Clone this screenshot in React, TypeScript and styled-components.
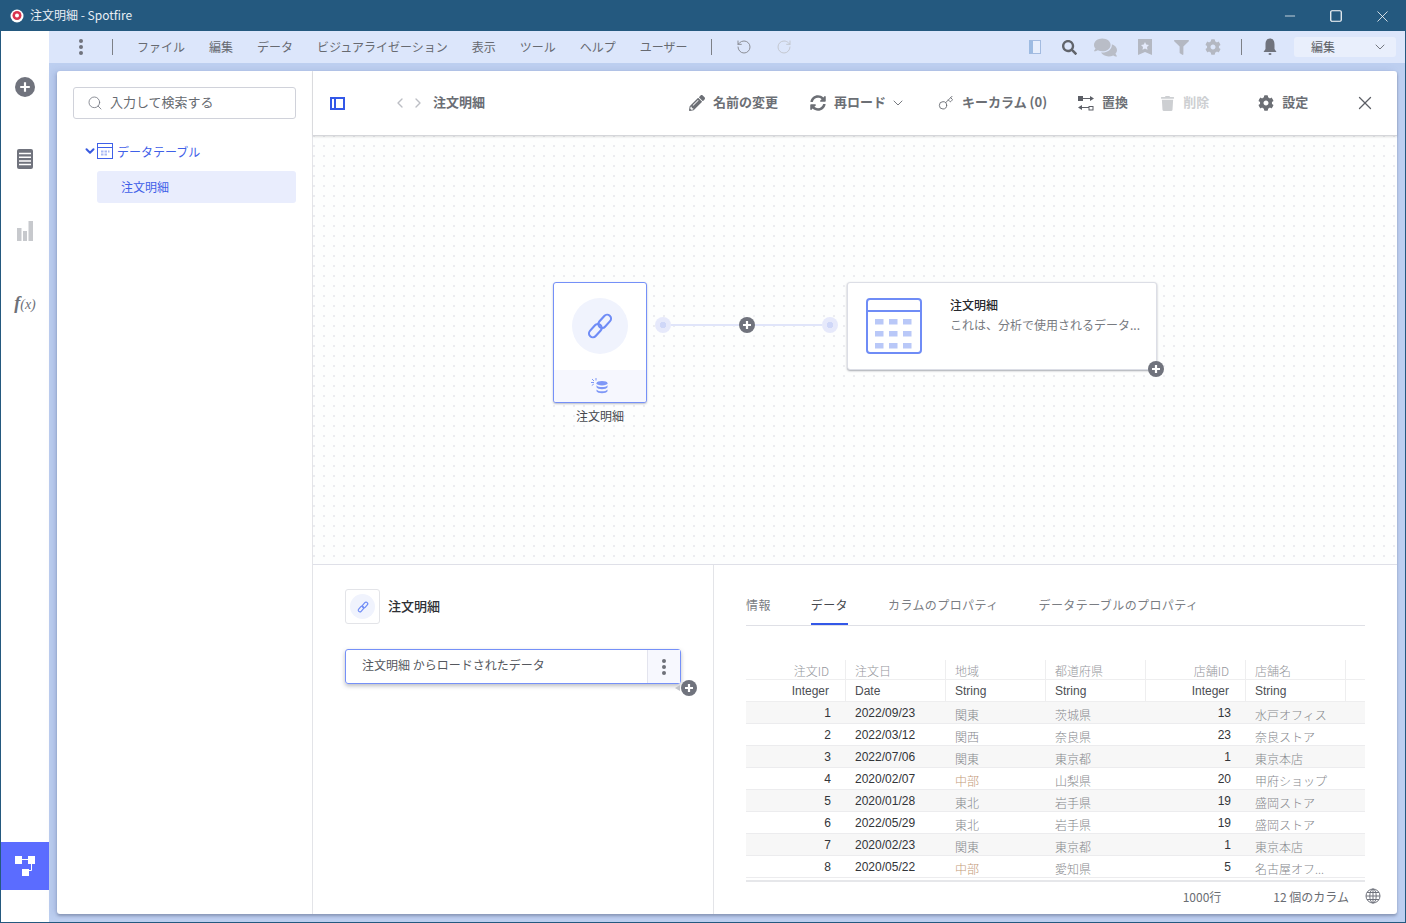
import styled, { createGlobalStyle } from 'styled-components';
import { ChevronDown, ChevronLeft, ChevronRight, Key, Minus, RotateCcw, RotateCw, Search, Square, X } from 'lucide-react';
import { FaCog, FaComments, FaFilter, FaPencilAlt, FaSearch, FaSyncAlt, FaTrash } from 'react-icons/fa';

const GlobalStyle = createGlobalStyle`
    html, body {
        margin: 0;
        padding: 0;
        background: #fff;
    }
    * {
        box-sizing: border-box;
    }
    body {
        font-family: "Noto Sans CJK JP", "Noto Sans", sans-serif;
        color: #5c5f66;
    }
`;

const MENU = ['ファイル', '編集', 'データ', 'ビジュアライゼーション', '表示', 'ツール', 'ヘルプ', 'ユーザー'];
const TABS = ['情報', 'データ', 'カラムのプロパティ', 'データテーブルのプロパティ'];
const COLUMNS = [
    { name: '注文ID', type: 'Integer', right: true },
    { name: '注文日', type: 'Date' },
    { name: '地域', type: 'String' },
    { name: '都道府県', type: 'String' },
    { name: '店舗ID', type: 'Integer', right: true },
    { name: '店舗名', type: 'String' },
];
const ROWS = [
    ['1', '2022/09/23', '関東', '茨城県', '13', '水戸オフィス'],
    ['2', '2022/03/12', '関西', '奈良県', '23', '奈良ストア'],
    ['3', '2022/07/06', '関東', '東京都', '1', '東京本店'],
    ['4', '2020/02/07', '中部', '山梨県', '20', '甲府ショップ'],
    ['5', '2020/01/28', '東北', '岩手県', '19', '盛岡ストア'],
    ['6', '2022/05/29', '東北', '岩手県', '19', '盛岡ストア'],
    ['7', '2020/02/23', '関東', '東京都', '1', '東京本店'],
    ['8', '2020/05/22', '中部', '愛知県', '5', '名古屋オフ...'],
];

function PlusBadge() {
    return (
        <svg width="10" height="10" viewBox="0 0 10 10">
            <path d="M5 1v8M1 5h8" stroke="#fff" strokeWidth="2.2" />
        </svg>
    );
}

function ChainIcon({ size, stroke }: { size: number; stroke: number }) {
    return (
        <svg width={size} height={size} viewBox="0 0 24 24" fill="none" stroke="#6f8cf6" strokeWidth={stroke}>
            <rect x="12.7" y="1.5" width="6.6" height="13" rx="3.3" transform="rotate(42 16 8)" />
            <rect x="4.7" y="9.5" width="6.6" height="13" rx="3.3" transform="rotate(42 8 16)" />
        </svg>
    );
}

function TableGlyph() {
    const cells = [];
    for (let r = 0; r < 3; r++) {
        for (let c = 0; c < 3; c++) {
            cells.push(<rect key={`${r}-${c}`} x={9 + c * 14} y={21 + r * 12} width="8.5" height="5.5" fill="#b9c8f8" />);
        }
    }
    return (
        <svg width="56" height="56" viewBox="0 0 56 56" fill="none">
            <rect x="1" y="1" width="54" height="54" rx="3" stroke="#6f8cf6" strokeWidth="2" />
            <path d="M1 13h54" stroke="#6f8cf6" strokeWidth="2" />
            {cells}
        </svg>
    );
}

function DatabaseSpark() {
    return (
        <svg width="20" height="16" viewBox="0 0 20 16" fill="#7f98f7">
            <ellipse cx="12" cy="5.2" rx="5.5" ry="2.3" />
            <path d="M6.5 7.2c1 1.4 3 1.900 5.500 1.900s4.500-.5 5.500-1.900v2c-.6 1.300-2.800 2-5.500 2s-4.900-.7-5.500-2z" />
            <path d="M6.500 11.400c1 1.300 3 1.900 5.500 1.900s4.500-.6 5.500-1.900v1.800c-.6 1.300-2.800 2-5.500 2s-4.900-.7-5.500-2z" />
            <path d="M1 4.500h3M2 1l2 2M6 0v2.500M1.800 7.500l2-1.500" stroke="#7f98f7" strokeWidth="1" />
        </svg>
    );
}

export default function App() {
    return (
        <Window>
            <GlobalStyle />
            <TitleBar>
                <AppLogo>
                    <svg width="14" height="14" viewBox="0 0 14 14">
                        <circle cx="7" cy="7" r="6.5" fill="#fff" />
                        <circle cx="7" cy="6.500" r="4.500" fill="#d8344f" />
                        <circle cx="7" cy="6.500" r="2" fill="#fff" />
                    </svg>
                </AppLogo>
                <WindowTitle>注文明細 - Spotfire</WindowTitle>
                <WindowButton><Minus size={16} strokeWidth={1.1} /></WindowButton>
                <WindowButton><Square size={14} strokeWidth={1.2} absoluteStrokeWidth /></WindowButton>
                <WindowButton><X size={19} strokeWidth={1} /></WindowButton>
            </TitleBar>
            <Body>
                <Rail>
                    <RailButton>
                        <RoundAdd $size={20}>
                            <svg width="12" height="12" viewBox="0 0 10 10">
                                <path d="M5 1v8M1 5h8" stroke="#fff" strokeWidth="1.800" />
                            </svg>
                        </RoundAdd>
                    </RailButton>
                    <RailButton>
                        <svg width="16" height="20" viewBox="0 0 16 20">
                            <rect width="16" height="20" rx="2" fill="#70737d" />
                            <path d="M2 4.500h12M2 8.200h12M2 11.900h12M2 15.600h12" stroke="#fff" strokeWidth="1.500" />
                        </svg>
                    </RailButton>
                    <RailButton>
                        <svg width="16" height="20" viewBox="0 0 16 20" fill="#c7c9cd">
                            <rect y="7" width="4.500" height="13" />
                            <rect x="6" y="10" width="4" height="10" />
                            <rect x="11.500" width="4.500" height="20" />
                        </svg>
                    </RailButton>
                    <RailButton>
                        <FxLabel>f<FxArgs>(x)</FxArgs></FxLabel>
                    </RailButton>
                    <FlowButton>
                        <svg width="20" height="20" viewBox="0 0 20 20" fill="#fff">
                            <rect y="0" width="7" height="8" />
                            <rect x="13" y="0" width="7" height="8" />
                            <rect x="7" y="13" width="7" height="8" />
                            <path d="M6 3.500h8M16.500 7v7.500H13" stroke="#fff" strokeWidth="1" fill="none" />
                        </svg>
                    </FlowButton>
                </Rail>
                <Main>
                    <MenuBar>
                        <Kebab $color="#70737d" />
                        <MenuDivider $left={29} />
                        <MenuList>
                            {MENU.map((item) => (
                                <MenuItem key={item}>{item}</MenuItem>
                            ))}
                        </MenuList>
                        <MenuDivider $left={23} />
                        <HistoryIcon $left={24}><RotateCcw size={16} strokeWidth={1.4} color="#85888f" /></HistoryIcon>
                        <HistoryIcon $left={24}><RotateCw size={16} strokeWidth={1.4} color="#c2c5cc" /></HistoryIcon>
                        <MenuRight>
                            <PanelGlyph />
                            <TopIcon $w={16} $left={20} $color="#61646b"><FaSearch size={15} /></TopIcon>
                            <TopIcon $w={24} $left={16} $color="#b9bdc7"><FaComments size={23} /></TopIcon>
                            <TopIcon $w={14} $left={21} $color="#b4b8c2">
                                <svg width="14" height="16" viewBox="0 0 14 16">
                                    <path d="M0 0h14v16l-7-3-7 3z" fill="#b4b8c2" />
                                    <path d="M7 3l1.200 2.500 2.800.4-2 2 .5 2.800L7 9.400l-2.500 1.300.5-2.800-2-2 2.800-.4z" fill="#e4eafb" />
                                </svg>
                            </TopIcon>
                            <TopIcon $w={16} $left={21} $color="#b4b8c2"><FaFilter size={15} /></TopIcon>
                            <TopIcon $w={16} $left={16} $color="#b4b8c2"><FaCog size={16} /></TopIcon>
                            <MenuDivider $left={20} />
                            <TopIcon $w={14} $left={21} $color="#70737d">
                                <svg width="14" height="18" viewBox="0 0 14 18" fill="#70737d">
                                    <path d="M7 0.500C3.500 0.500 2.500 3.500 2.500 6.500V11L.5 14h13l-2-3V6.500C11.500 3.500 10.500.5 7 .5z" />
                                    <ellipse cx="7" cy="16" rx="1.500" ry="1" />
                                </svg>
                            </TopIcon>
                            <ModeSelect>
                                <MenuItem>編集</MenuItem>
                                <ChevronDown size={16} strokeWidth={1.4} color="#6b6e75" />
                            </ModeSelect>
                        </MenuRight>
                    </MenuBar>
                    <Content>
                        <Card>
                            <SidePane>
                                <SearchBox>
                                    <Search size={16} strokeWidth={1.2} color="#70737d" />
                                    <RaisedText>入力して検索する</RaisedText>
                                </SearchBox>
                                <TreeHead>
                                    <ChevronDown size={14} strokeWidth={3.4} color="#3a5be0" />
                                    <svg width="16" height="16" viewBox="0 0 16 16" fill="none">
                                        <rect x=".5" y=".5" width="15" height="15" stroke="#3f60e8" />
                                        <path d="M.5 4.500h15" stroke="#3f60e8" />
                                        <path d="M4 7.500h2.500v2H4zM7.500 7.500H10v2H7.500zM11 7.500h1.500v2H11zM4 10.500h2.500v2H4zM7.500 10.500H10v2H7.500z" fill="#a9b9f5" />
                                    </svg>
                                    データテーブル
                                </TreeHead>
                                <TreeItem>注文明細</TreeItem>
                            </SidePane>
                            <RightPane>
                                <Toolbar>
                                    <PanelToggle />
                                    <NavArrows>
                                        <ChevronLeft size={16} strokeWidth={2} color="#bcbec4" />
                                        <ChevronRight size={16} strokeWidth={2} color="#bcbec4" />
                                    </NavArrows>
                                    <Crumb><RaisedText>注文明細</RaisedText></Crumb>
                                    <ToolButton $left={204}><FaPencilAlt size={16} /><RaisedText>名前の変更</RaisedText></ToolButton>
                                    <ToolButton $left={32}>
                                        <FaSyncAlt size={16} /><RaisedText>再ロード</RaisedText>
                                        <ToolCaret><ChevronDown size={16} strokeWidth={1.4} /></ToolCaret>
                                    </ToolButton>
                                    <ToolButton $left={32}><Key size={16} strokeWidth={1.4} /><RaisedText>キーカラム (0)</RaisedText></ToolButton>
                                    <ToolButton $left={31}>
                                        <svg width="16" height="16" viewBox="0 0 16 16" fill="#5c5f66">
                                            <path d="M0 1h5v5H0zM5 3h7V1l4 2.500L12 6V4H5z" />
                                            <path d="M15.500 15.500h-5v-4.500h5zM11 13H4v2l-4-2.500L4 10v2h7z" />
                                            <rect x="11.500" y="12" width="3" height="2.500" fill="#fff" />
                                        </svg>
                                        <RaisedText>置換</RaisedText>
                                    </ToolButton>
                                    <ToolButton $left={32} $disabled><FaTrash size={15} /><RaisedText>削除</RaisedText></ToolButton>
                                    <ToolButton $left={49}><FaCog size={16} /><RaisedText>設定</RaisedText></ToolButton>
                                    <CloseButton><X size={22} strokeWidth={1.400} /></CloseButton>
                                </Toolbar>
                                <Canvas>
                                    <SourceColumn>
                                        <SourceNode>
                                            <SourceTop>
                                                <SourceCircle><ChainIcon size={28} stroke={1.800} /></SourceCircle>
                                            </SourceTop>
                                            <SourceBottom><DatabaseSpark /></SourceBottom>
                                        </SourceNode>
                                        <NodeLabel>注文明細</NodeLabel>
                                    </SourceColumn>
                                    <Connector>
                                        <Port />
                                        <Wire />
                                        <RoundAdd $size={16}><PlusBadge /></RoundAdd>
                                        <Wire />
                                        <Port />
                                    </Connector>
                                    <TableNode>
                                        <TableGlyph />
                                        <TableNodeText>
                                            <TableNodeTitle>注文明細</TableNodeTitle>
                                            <TableNodeDesc>これは、分析で使用されるデータ...</TableNodeDesc>
                                        </TableNodeText>
                                        <CornerAdd><RoundAdd $size={16}><PlusBadge /></RoundAdd></CornerAdd>
                                    </TableNode>
                                </Canvas>
                                <BottomArea>
                                    <StepPanel>
                                        <StepHead>
                                            <StepIconBox>
                                                <StepIconCircle><ChainIcon size={12} stroke={2.400} /></StepIconCircle>
                                            </StepIconBox>
                                            <MenuItem>注文明細</MenuItem>
                                        </StepHead>
                                        <StepRow>
                                            <StepText><RaisedText>注文明細 からロードされたデータ</RaisedText></StepText>
                                            <StepMenu><Kebab $color="#6e7179" /></StepMenu>
                                            <CornerAddSmall>
                                                <SmallArrow />
                                                <RoundAdd $size={16}><PlusBadge /></RoundAdd>
                                            </CornerAddSmall>
                                        </StepRow>
                                    </StepPanel>
                                    <DetailPanel>
                                        <Tabs>
                                            {TABS.map((tab) => (
                                                <Tab key={tab} $active={tab === 'データ'}>{tab}</Tab>
                                            ))}
                                        </Tabs>
                                        <DataTable>
                                            <NameRow>
                                                {COLUMNS.map((col) => (
                                                    <NameCell key={col.name} $right={col.right}>{col.name}</NameCell>
                                                ))}
                                            </NameRow>
                                            <TypeRow>
                                                {COLUMNS.map((col) => (
                                                    <TypeCell key={col.name} $right={col.right}>{col.type}</TypeCell>
                                                ))}
                                            </TypeRow>
                                            {ROWS.map((row, i) => (
                                                <DataRow key={row[0]} $odd={i % 2 === 0}>
                                                    {row.map((value, c) =>
                                                        COLUMNS[c].type === 'String' ? (
                                                            <TextCell key={c} $warm={value === '中部'}>{value}</TextCell>
                                                        ) : (
                                                            <NumberCell key={c} $right={COLUMNS[c].right}>{value}</NumberCell>
                                                        ),
                                                    )}
                                                </DataRow>
                                            ))}
                                        </DataTable>
                                        <TableFooter>
                                            <span>1000行</span>
                                            <FooterColumns>12 個のカラム</FooterColumns>
                                            <svg width="16" height="16" viewBox="0 0 16 16" fill="none" stroke="#70737d" strokeWidth="1">
                                                <circle cx="8" cy="8" r="7" />
                                                <ellipse cx="8" cy="8" rx="3.200" ry="7" />
                                                <path d="M8 1v14M1 8h14M2 4.500h12M2 11.500h12" />
                                            </svg>
                                        </TableFooter>
                                    </DetailPanel>
                                </BottomArea>
                            </RightPane>
                        </Card>
                    </Content>
                </Main>
            </Body>
        </Window>
    );
}

const Window = styled.div`
    width: 1406px;
    height: 923px;
    display: flex;
    flex-direction: column;
    border: 1px solid #24597f;
    overflow: hidden;
`;

const TitleBar = styled.div`
    height: 30px;
    flex: none;
    display: flex;
    align-items: center;
    background: #24597f;
    padding-left: 9px;
`;

const AppLogo = styled.div`
    width: 14px;
    height: 14px;
    display: flex;
`;

const WindowTitle = styled.div`
    flex: 1;
    margin-left: 6px;
    padding-bottom: 3px;
    color: #e8eef4;
    font-size: 12px;
`;

const WindowButton = styled.div`
    width: 46px;
    height: 30px;
    display: flex;
    align-items: center;
    justify-content: center;
    color: #fff;
`;

const Body = styled.div`
    flex: 1;
    display: flex;
    min-height: 0;
`;

const Rail = styled.div`
    width: 48px;
    flex: none;
    display: flex;
    flex-direction: column;
    background: #fff;
    padding: 20px 0 32px;
`;

const RailButton = styled.div`
    height: 72px;
    flex: none;
    display: flex;
    align-items: center;
    justify-content: center;
`;

const FxLabel = styled.span`
    font-family: "Liberation Serif", serif;
    font-style: italic;
    font-weight: 700;
    font-size: 18px;
    color: #6d7078;
`;

const FxArgs = styled.span`
    font-size: 14px;
    font-weight: 400;
`;

const FlowButton = styled.div`
    margin-top: auto;
    height: 48px;
    display: flex;
    align-items: center;
    justify-content: center;
    background: #5b6cff;
`;

const RoundAdd = styled.div<{ $size: number }>`
    width: ${({ $size }) => $size}px;
    height: ${({ $size }) => $size}px;
    flex: none;
    border-radius: 50%;
    display: flex;
    align-items: center;
    justify-content: center;
    background: #70737d;
`;

const Main = styled.div`
    flex: 1;
    min-width: 0;
    display: flex;
    flex-direction: column;
`;

const MenuBar = styled.div`
    height: 32px;
    flex: none;
    display: flex;
    align-items: center;
    padding-left: 30px;
    background: #dce6fb;
    font-size: 12px;
    color: #676a71;
`;

const Kebab = styled.div<{ $color: string }>`
    width: 4px;
    height: 4px;
    flex: none;
    border-radius: 50%;
    background: ${({ $color }) => $color};
    box-shadow: 0 -6px 0 ${({ $color }) => $color}, 0 6px 0 ${({ $color }) => $color};
`;

const MenuDivider = styled.div<{ $left: number }>`
    width: 1px;
    height: 16px;
    flex: none;
    margin-left: ${({ $left }) => $left}px;
    background: #7d8087;
`;

const MenuList = styled.div`
    display: flex;
    gap: 24px;
    margin-left: 24px;
`;

const MenuItem = styled.span`
    white-space: nowrap;
    padding-bottom: 2px;
`;

const RaisedText = styled.span`
    white-space: nowrap;
    padding-bottom: 4px;
`;

const HistoryIcon = styled.div<{ $left: number }>`
    display: flex;
    margin-left: ${({ $left }) => $left}px;
`;

const MenuRight = styled.div`
    margin-left: auto;
    display: flex;
    align-items: center;
    padding-right: 9px;
`;

const PanelGlyph = styled.div`
    width: 12px;
    height: 14px;
    border: 1px solid #a3bbe0;
    border-left-width: 4px;
    border-left-color: #9dbbe2;
    background: #e7eefc;
`;

const TopIcon = styled.div<{ $w: number; $left: number; $color: string }>`
    width: ${({ $w }) => $w}px;
    margin-left: ${({ $left }) => $left}px;
    display: flex;
    justify-content: center;
    color: ${({ $color }) => $color};
`;

const ModeSelect = styled.div`
    width: 102px;
    height: 20px;
    margin-left: 17px;
    padding: 0 8px 0 17px;
    display: flex;
    align-items: center;
    justify-content: space-between;
    border-radius: 3px;
    background: #e9effc;
    color: #5c5f66;
`;

const Content = styled.div`
    flex: 1;
    min-height: 0;
    padding: 8px;
    background: #bdcff0;
`;

const Card = styled.div`
    height: 100%;
    display: flex;
    border-radius: 3px;
    background: #fff;
    box-shadow: 0 2px 3px rgba(80, 90, 120, 0.45), -4px 0 6px rgba(120, 140, 190, 0.25);
`;

const SidePane = styled.div`
    width: 256px;
    flex: none;
    padding: 16px 16px 0;
    border-right: 1px solid #e3e4e8;
`;

const SearchBox = styled.div`
    height: 32px;
    display: flex;
    align-items: center;
    gap: 7px;
    padding-left: 13px;
    border: 1px solid #d0d2da;
    border-radius: 3px;
    font-size: 13px;
    color: #666a70;
`;

const TreeHead = styled.div`
    height: 16px;
    margin: 24px 0 0 10px;
    display: flex;
    align-items: center;
    gap: 0;
    font-size: 12px;
    color: #3f60e8;

    svg:nth-child(2) {
        margin-right: 4px;
    }
`;

const TreeItem = styled.div`
    height: 32px;
    margin: 12px 0 0 24px;
    padding: 0 0 2px 24px;
    display: flex;
    align-items: center;
    border-radius: 3px;
    background: #e9edfd;
    font-size: 12px;
    color: #3f60e8;
`;

const RightPane = styled.div`
    flex: 1;
    min-width: 0;
    display: flex;
    flex-direction: column;
`;

const Toolbar = styled.div`
    height: 65px;
    flex: none;
    display: flex;
    align-items: center;
    padding-left: 17px;
    border-bottom: 1px solid #d5d6da;
    box-shadow: 0 1px 2px rgba(0, 0, 0, 0.12);
    position: relative;
`;

const PanelToggle = styled.div`
    width: 15px;
    height: 13px;
    flex: none;
    border: 2px solid #3358e8;
    background: linear-gradient(to right, transparent 2px, #3358e8 2px 4px, transparent 4px);
`;

const NavArrows = styled.div`
    margin-left: 47px;
    display: flex;
    gap: 2px;
`;

const Crumb = styled.div`
    margin-left: 7px;
    display: flex;
    font-size: 13px;
    font-weight: 700;
    color: #6a6d74;
`;

const ToolButton = styled.div<{ $left: number; $disabled?: boolean }>`
    margin-left: ${({ $left }) => $left}px;
    display: flex;
    align-items: center;
    gap: 8px;
    font-size: 13px;
    font-weight: 700;
    white-space: nowrap;
    color: ${({ $disabled }) => ($disabled ? '#cdcfd2' : '#6c6f75')};
`;

const ToolCaret = styled.span`
    display: flex;
    margin-left: -4px;
`;

const CloseButton = styled.div`
    margin: 0 21px 0 auto;
    display: flex;
    color: #5c5f66;
`;

const Canvas = styled.div`
    height: 429px;
    flex: none;
    display: flex;
    align-items: flex-start;
    padding: 146px 0 0 240px;
    background-color: #fdfefe;
    background-image: radial-gradient(circle at 1px 1px, #ebecf0 1px, transparent 1.1px);
    background-size: 10px 10px;
    background-position: 0 -1px;
    border-bottom: 1px solid #dfe0e8;
`;

const SourceColumn = styled.div`
    width: 94px;
    flex: none;
    display: flex;
    flex-direction: column;
    align-items: center;
`;

const SourceNode = styled.div`
    width: 94px;
    height: 121px;
    display: flex;
    flex-direction: column;
    overflow: hidden;
    background: #fff;
    border: 1px solid #7590f8;
    border-radius: 3px;
    box-shadow: 0 1px 2px rgba(80, 90, 120, 0.4);
`;

const SourceTop = styled.div`
    flex: 1;
    display: flex;
    justify-content: center;
    padding-top: 15px;
`;

const SourceCircle = styled.div`
    width: 56px;
    height: 56px;
    display: flex;
    align-items: center;
    justify-content: center;
    border-radius: 50%;
    background: #f0f3fd;
`;

const SourceBottom = styled.div`
    height: 32px;
    flex: none;
    display: flex;
    align-items: center;
    justify-content: center;
    background: #f6f7fe;
`;

const NodeLabel = styled.div`
    margin-top: 4px;
    font-size: 12px;
    line-height: 18px;
    color: #45484e;
`;

const Connector = styled.div`
    width: 183px;
    height: 16px;
    flex: none;
    margin: 35px 0 0 8px;
    display: flex;
    align-items: center;
`;

const Port = styled.div`
    width: 16px;
    height: 16px;
    flex: none;
    border-radius: 50%;
    background: radial-gradient(circle, #cfd7f8 0 3px, #e6e9fb 3.5px);
`;

const Wire = styled.div`
    flex: 1;
    height: 2px;
    background: #e0e5fa;
`;

const TableNode = styled.div`
    width: 310px;
    height: 88px;
    flex: none;
    margin-left: 9px;
    padding: 15px 18px;
    display: flex;
    position: relative;
    background: #fff;
    border: 1px solid #dcdee6;
    border-radius: 3px;
    box-shadow: 0 1px 2px rgba(60, 65, 80, 0.45);
`;

const TableNodeText = styled.div`
    margin: -2px 0 0 28px;
    min-width: 0;
    flex: 1;
`;

const TableNodeTitle = styled.div`
    font-size: 12px;
    line-height: 18px;
    font-weight: 500;
    color: #26282c;
`;

const TableNodeDesc = styled.div`
    margin-top: 2px;
    font-size: 12px;
    line-height: 18px;
    white-space: nowrap;
    color: #777a80;
    width: 190px;
    overflow: hidden;
`;

const CornerAdd = styled.div`
    position: absolute;
    right: -8px;
    bottom: -8px;
`;

const BottomArea = styled.div`
    flex: 1;
    min-height: 0;
    display: flex;
`;

const StepPanel = styled.div`
    width: 401px;
    flex: none;
    padding: 24px 32px;
    border-right: 1px solid #e3e4e8;
`;

const StepHead = styled.div`
    display: flex;
    align-items: center;
    gap: 8px;
    font-size: 13px;
    font-weight: 500;
    color: #2e3034;
`;

const StepIconBox = styled.div`
    width: 35px;
    height: 35px;
    display: flex;
    align-items: center;
    justify-content: center;
    border: 1px solid #e3e4e8;
    border-radius: 3px;
`;

const StepIconCircle = styled.div`
    width: 25px;
    height: 25px;
    display: flex;
    align-items: center;
    justify-content: center;
    border-radius: 50%;
    background: #f0f3fd;
`;

const StepRow = styled.div`
    width: 336px;
    height: 35px;
    margin-top: 25px;
    display: flex;
    position: relative;
    border: 1px solid #7590f8;
    border-radius: 3px;
    box-shadow: 0 2px 4px rgba(60, 65, 80, 0.35);
`;

const StepText = styled.div`
    flex: 1;
    padding-left: 16px;
    display: flex;
    align-items: center;
    font-size: 12px;
    color: #55585e;
`;

const StepMenu = styled.div`
    width: 33px;
    display: flex;
    align-items: center;
    justify-content: center;
    background: #f7f8fe;
    border-left: 1px solid #e3e4ee;
`;

const CornerAddSmall = styled.div`
    position: absolute;
    right: -17px;
    bottom: -13px;
    display: flex;
    align-items: center;
    gap: 1px;
`;

const SmallArrow = styled.div`
    width: 0;
    height: 0;
    border-style: solid;
    border-width: 3px 5px 3px 0;
    border-color: transparent #c2c4ca transparent transparent;
`;

const DetailPanel = styled.div`
    flex: 1;
    min-width: 0;
    padding: 0 32px;
    display: flex;
    flex-direction: column;
`;

const Tabs = styled.div`
    height: 61px;
    flex: none;
    display: flex;
    gap: 40px;
    border-bottom: 1px solid #dfe0e6;
`;

const Tab = styled.div<{ $active?: boolean }>`
    height: 60px;
    padding-top: 31px;
    font-size: 12px;
    letter-spacing: 0.4px;
    line-height: 18px;
    white-space: nowrap;
    color: ${({ $active }) => ($active ? '#45484e' : '#7a7d83')};
    border-bottom: 2px solid ${({ $active }) => ($active ? '#3358e8' : 'transparent')};
`;

const DataTable = styled.div`
    margin-top: 34px;
    padding-bottom: 2px;
    border-bottom: 2px solid #e6e7ea;
    display: flex;
    flex-direction: column;
`;

const NameRow = styled.div`
    height: 20px;
    display: grid;
    grid-template-columns: repeat(6, 100px) 19px;
    border-bottom: 1px solid #eeeeef;
`;

const TypeRow = styled(NameRow)`
    height: 22px;
`;

const NameCell = styled.div<{ $right?: boolean }>`
    padding: 0 16px 0 9px;
    border-right: 1px solid #eeeeef;
    font-size: 12px;
    line-height: 22px;
    font-weight: 300;
    text-align: ${({ $right }) => ($right ? 'right' : 'left')};
    color: #94969b;
`;

const TypeCell = styled.div<{ $right?: boolean }>`
    padding: 0 16px 0 9px;
    border-right: 1px solid #eeeeef;
    font-family: "Liberation Sans", sans-serif;
    font-size: 12px;
    line-height: 23px;
    text-align: ${({ $right }) => ($right ? 'right' : 'left')};
    color: #4c4e53;
`;

const DataRow = styled.div<{ $odd: boolean }>`
    height: 22px;
    display: grid;
    grid-template-columns: repeat(6, 100px) 19px;
    border-bottom: 1px solid #ececee;
    background: ${({ $odd }) => ($odd ? '#f7f7f7' : '#fff')};
`;

const NumberCell = styled.div<{ $right?: boolean }>`
    padding: 0 15px 0 9px;
    font-family: "Liberation Sans", sans-serif;
    font-size: 12px;
    line-height: 23px;
    text-align: ${({ $right }) => ($right ? 'right' : 'left')};
    color: #333539;
`;

const TextCell = styled.div<{ $warm?: boolean }>`
    padding-left: 9px;
    font-size: 12px;
    line-height: 26px;
    font-weight: 300;
    white-space: nowrap;
    color: ${({ $warm }) => ($warm ? '#c39a78' : '#85878c')};
`;

const TableFooter = styled.div`
    height: 34px;
    margin-right: -16px;
    padding-bottom: 4px;
    display: flex;
    align-items: center;
    justify-content: flex-end;
    font-size: 12px;
    color: #6a6d73;
`;

const FooterColumns = styled.span`
    margin: 0 16px 0 52px;
`;
